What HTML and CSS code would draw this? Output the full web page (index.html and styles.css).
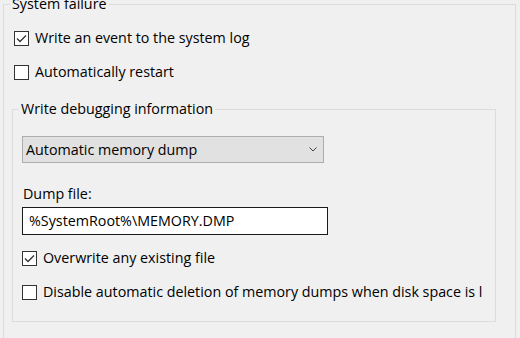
FILE: index.html
```html
<!DOCTYPE html>
<html lang="en">
<head>
    <meta charset="UTF-8">
    <title>Startup and Recovery</title>
    <link rel="stylesheet" href="styles.css">
</head>
<body>
    <fieldset class="group outer">
        <legend>System failure</legend>

        <label class="check-row first">
            <span class="box checked">
                <svg viewBox="0 0 15 15" width="15" height="15"><polyline points="3,7.5 6,10.5 12,4.5" /></svg>
            </span>
            <span>Write an event to the system log</span>
        </label>
        <label class="check-row">
            <span class="box"></span>
            <span>Automatically restart</span>
        </label>

        <fieldset class="group inner">
            <legend>Write debugging information</legend>

            <div class="combo">
                <span>Automatic memory dump</span>
                <svg class="chevron" viewBox="0 0 8 5" width="8" height="5"><polyline points="0.5,0.5 4,4 7.5,0.5" /></svg>
            </div>

            <div class="field-label">Dump file:</div>
            <div class="textbox">%SystemRoot%\MEMORY.DMP</div>

            <label class="check-row">
                <span class="box checked">
                    <svg viewBox="0 0 15 15" width="15" height="15"><polyline points="3,7.5 6,10.5 12,4.5" /></svg>
                </span>
                <span>Overwrite any existing file</span>
            </label>
            <label class="check-row">
                <span class="box"></span>
                <span>Disable automatic deletion of memory dumps when disk space is low</span>
            </label>
        </fieldset>
    </fieldset>
</body>
</html>
```

FILE: styles.css
```css
:root {
    --window-bg: #f0f0f0;
    --group-border: #dcdcdc;
    --text-color: #000000;
    --box-border: #333333;
}

body {
    margin: 0;
    background-color: var(--window-bg);
    color: var(--text-color);
    font-family: 'Open Sans', 'Noto Sans', sans-serif;
    font-size: 14.3px;
    line-height: 20px;
    overflow: hidden;
}

.group {
    border: 1px solid var(--group-border);
    margin: 0;
    min-width: 0;
}

.group legend {
    padding: 0 2px;
    line-height: 20px;
}

.outer {
    margin: -6px 4px 0 3px;
    padding: 0 19px 40px 6px;
}

.inner {
    margin: 17px 0 0 2px;
    padding: 0 13px 19px 9px;
}

.inner legend {
    margin-left: -3px;
}

.check-row {
    display: flex;
    align-items: center;
    height: 20px;
    margin-top: 14px;
    white-space: nowrap;
    overflow: hidden;
}

.outer > .check-row {
    padding-left: 4px;
}

.check-row.first {
    margin-top: 14px;
}

.box {
    flex: none;
    width: 13px;
    height: 13px;
    border: 1px solid var(--box-border);
    background-color: #ffffff;
    margin-right: 6px;
    position: relative;
}

.box svg {
    position: absolute;
    left: -1px;
    top: -1px;
    fill: none;
    stroke: #333333;
    stroke-width: 1.3;
}

.combo {
    display: flex;
    align-items: center;
    justify-content: space-between;
    box-sizing: border-box;
    width: 302px;
    height: 27px;
    margin-top: 17px;
    padding: 0 6px 0 3px;
    background-color: #e1e1e1;
    border: 1px solid #adadad;
}

.chevron {
    fill: none;
    stroke: #444444;
    stroke-width: 1;
}

.field-label {
    margin-top: 21px;
    padding-left: 1px;
}

.textbox {
    box-sizing: border-box;
    width: 306px;
    height: 28px;
    margin-top: 3px;
    padding: 3px 6px;
    background-color: #ffffff;
    border: 1px solid #1a1a1a;
}

.inner .check-row {
    margin-top: 13px;
}

.inner .check-row + .check-row {
    margin-top: 14px;
}
```
